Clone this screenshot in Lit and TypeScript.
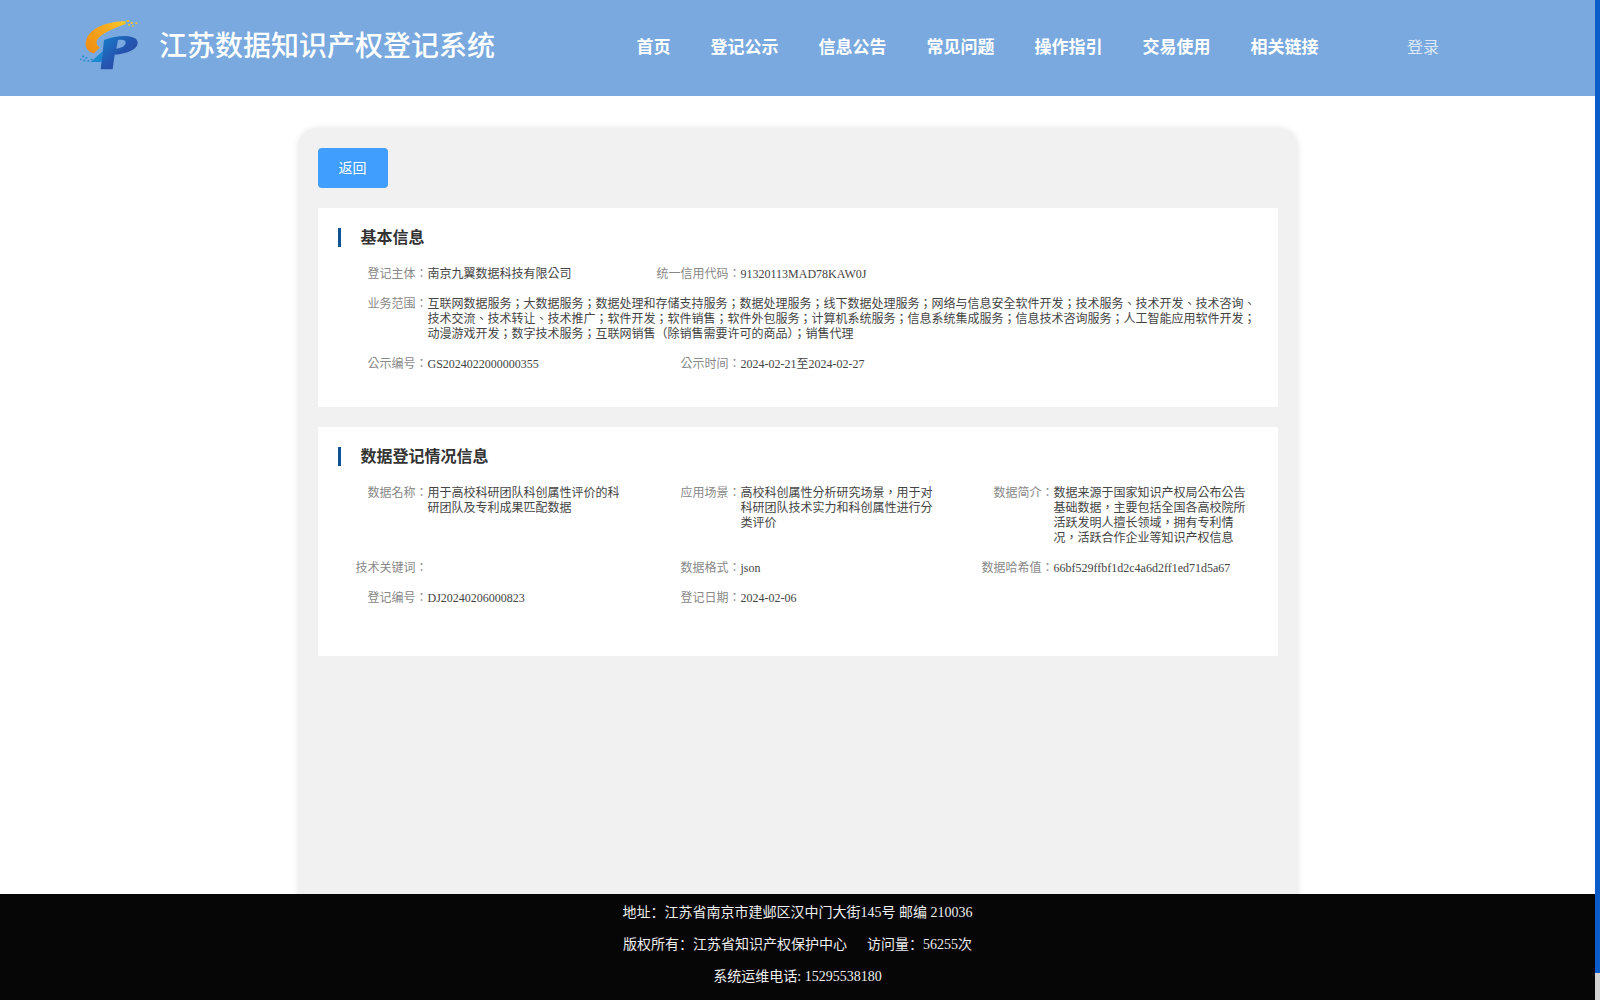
import { LitElement, css, html } from 'lit';
import { customElement } from 'lit/decorators.js';

const NAV = ['首页', '登记公示', '信息公告', '常见问题', '操作指引', '交易使用', '相关链接'];

@customElement('app-root')
export class AppRoot extends LitElement {
  static styles = css`
    :host {
      display: flex;
      height: 1000px;
      overflow: hidden;
      font-family: "Liberation Serif", "Noto Sans CJK SC", serif;
      font-size: 12px;
      color: #333;
    }
    .page {
      width: 1595px;
      flex: none;
      display: flex;
      flex-direction: column;
    }
    .scrollbar {
      flex: 1;
      background: #d3d3d3;
    }
    .thumb {
      height: 973px;
      background: #0a5cc9;
    }

    .header {
      height: 96px;
      flex: none;
      display: flex;
      align-items: center;
      padding-left: 70px;
      background: #79a9de;
      color: #fff;
    }
    .logo {
      width: 80px;
      height: 70px;
      margin-bottom: 6px;
      flex: none;
    }
    .title {
      margin: 0 0 8px 9px;
      width: 336px;
      font-size: 28px;
      font-weight: 500;
      white-space: nowrap;
    }
    .nav {
      display: flex;
      gap: 40px;
      margin: 0 0 5px 141.5px;
      font-size: 17px;
      font-weight: 700;
    }
    .login {
      margin: 0 0 5px 88.5px;
      font-size: 16px;
      color: #dce8f6;
    }

    .main {
      flex: 1;
      min-height: 0;
      overflow: hidden;
      padding-top: 32px;
    }
    .card {
      width: 960px;
      height: 900px;
      margin: 0 auto;
      padding: 20px;
      border-radius: 20px;
      background: #f1f1f1;
      box-shadow: 0 0 6px rgba(0, 0, 0, 0.1);
    }
    .back {
      display: block;
      width: 70px;
      height: 40px;
      margin-bottom: 20px;
      padding: 0 0 2px;
      border: 0;
      border-radius: 4px;
      background: #409eff;
      color: #fff;
      font: inherit;
      font-size: 14px;
    }
    .section {
      margin-bottom: 20px;
      padding: 20px 20px 35px;
      background: #fff;
    }
    .section.tall {
      padding-bottom: 50px;
    }
    .section-title {
      margin: 0 0 20px;
      padding-left: 20px;
      border-left: 3px solid #0b5394;
      font-size: 16px;
      line-height: 19px;
      font-weight: 700;
      color: #333;
    }
    .row {
      display: grid;
      grid-template-columns: repeat(3, 313px);
      margin: 0 0 15px 1px;
      line-height: 15px;
      font-family: "Liberation Serif", "Noto Sans CJK TC", serif;
    }
    .row:last-child {
      margin-bottom: 0;
    }
    .item {
      display: flex;
    }
    .item.wide {
      grid-column: 1 / -1;
    }
    .label {
      width: 89px;
      flex: none;
      text-align: right;
      color: #888;
    }
    .value {
      width: 200px;
      color: #444;
    }
    .wide .value {
      width: 830px;
    }

    .footer {
      height: 106px;
      flex: none;
      display: flex;
      flex-direction: column;
      align-items: center;
      justify-content: center;
      gap: 12px;
      padding-bottom: 5px;
      box-sizing: border-box;
      background: #060606;
      color: #eee;
      font-size: 14px;
      line-height: 20px;
    }
    .footer .spaced {
      margin-left: 20px;
    }
  `;

  private item(label: string, value = '') {
    return html`<div class="item">
      <span class="label">${label}：</span><span class="value">${value}</span>
    </div>`;
  }

  private logo() {
    return html`<svg class="logo" viewBox="0 0 240 210" aria-hidden="true">
      <defs>
        <linearGradient id="sw" x1="0" y1="1" x2="1" y2="0">
          <stop offset="0" stop-color="#f08a12" />
          <stop offset="0.6" stop-color="#f5a81e" />
          <stop offset="1" stop-color="#f9c92c" />
        </linearGradient>
        <linearGradient id="pb" x1="0" y1="0" x2="1" y2="1">
          <stop offset="0" stop-color="#1680cc" />
          <stop offset="0.5" stop-color="#2456b0" />
          <stop offset="1" stop-color="#2c3f9a" />
        </linearGradient>
      </defs>
      <!-- orange swoosh -->
      <path
        d="M168 34C118 34 60 50 48 92C43 112 54 126 72 130C78 124 84 118 90 112C80 106 76 98 84 86C96 70 130 56 166 42Z"
        fill="url(#sw)"
      />
      <!-- left wedge -->
      <path d="M62 156L98 124L95 156Z" fill="#1b8ad2" />
      <!-- P stem and bowl -->
      <path
        d="M102 90C150 72 202 74 203 98C203 118 172 130 134 134L128 178L92 178Z"
        fill="url(#pb)"
      />
      <path d="M139 116L144 90C158 87 168 90 167 99C165 109 152 115 139 116Z" fill="#79a9de" />
      <g fill="#f5c02a">
        <rect x="170" y="30" width="7" height="6" /><rect x="182" y="36" width="6" height="6" />
        <rect x="196" y="37" width="6" height="5" /><rect x="174" y="42" width="6" height="5" />
        <rect x="186" y="46" width="5" height="4" />
      </g>
      <g fill="#2f8fd4">
        <rect x="36" y="137" width="6" height="5" /><rect x="46" y="141" width="6" height="5" />
        <rect x="30" y="146" width="5" height="4" /><rect x="40" y="149" width="6" height="5" />
        <rect x="52" y="150" width="6" height="5" /><rect x="62" y="146" width="6" height="5" />
      </g>
    </svg>`;
  }

  render() {
    return html`
      <div class="page">
        <header class="header">
          ${this.logo()}
          <h1 class="title">江苏数据知识产权登记系统</h1>
          <nav class="nav">${NAV.map((n) => html`<span>${n}</span>`)}</nav>
          <span class="login">登录</span>
        </header>

        <main class="main">
          <div class="card">
            <button class="back">返回</button>

            <section class="section">
              <h2 class="section-title">基本信息</h2>
              <div class="row">
                ${this.item('登记主体', '南京九翼数据科技有限公司')}
                ${this.item('统一信用代码', '91320113MAD78KAW0J')}
              </div>
              <div class="row">
                <div class="item wide">
                  <span class="label">业务范围：</span>
                  <span class="value">互联网数据服务；大数据服务；数据处理和存储支持服务；数据处理服务；线下数据处理服务；网络与信息安全软件开发；技术服务、技术开发、技术咨询、技术交流、技术转让、技术推广；软件开发；软件销售；软件外包服务；计算机系统服务；信息系统集成服务；信息技术咨询服务；人工智能应用软件开发；动漫游戏开发；数字技术服务；互联网销售（除销售需要许可的商品）；销售代理</span>
                </div>
              </div>
              <div class="row">
                ${this.item('公示编号', 'GS2024022000000355')}
                ${this.item('公示时间', '2024-02-21至2024-02-27')}
              </div>
            </section>

            <section class="section tall">
              <h2 class="section-title">数据登记情况信息</h2>
              <div class="row">
                ${this.item('数据名称', '用于高校科研团队科创属性评价的科研团队及专利成果匹配数据')}
                ${this.item('应用场景', '高校科创属性分析研究场景，用于对科研团队技术实力和科创属性进行分类评价')}
                ${this.item('数据简介', '数据来源于国家知识产权局公布公告基础数据，主要包括全国各高校院所活跃发明人擅长领域，拥有专利情况，活跃合作企业等知识产权信息')}
              </div>
              <div class="row">
                ${this.item('技术关键词')}
                ${this.item('数据格式', 'json')}
                ${this.item('数据哈希值', '66bf529ffbf1d2c4a6d2ff1ed71d5a67')}
              </div>
              <div class="row">
                ${this.item('登记编号', 'DJ20240206000823')}
                ${this.item('登记日期', '2024-02-06')}
              </div>
            </section>
          </div>
        </main>

        <footer class="footer">
          <div>地址：江苏省南京市建邺区汉中门大街145号 邮编 210036</div>
          <div>版权所有：江苏省知识产权保护中心<span class="spaced">访问量：56255次</span></div>
          <div>系统运维电话: 15295538180</div>
        </footer>
      </div>
      <div class="scrollbar"><div class="thumb"></div></div>
    `;
  }
}
